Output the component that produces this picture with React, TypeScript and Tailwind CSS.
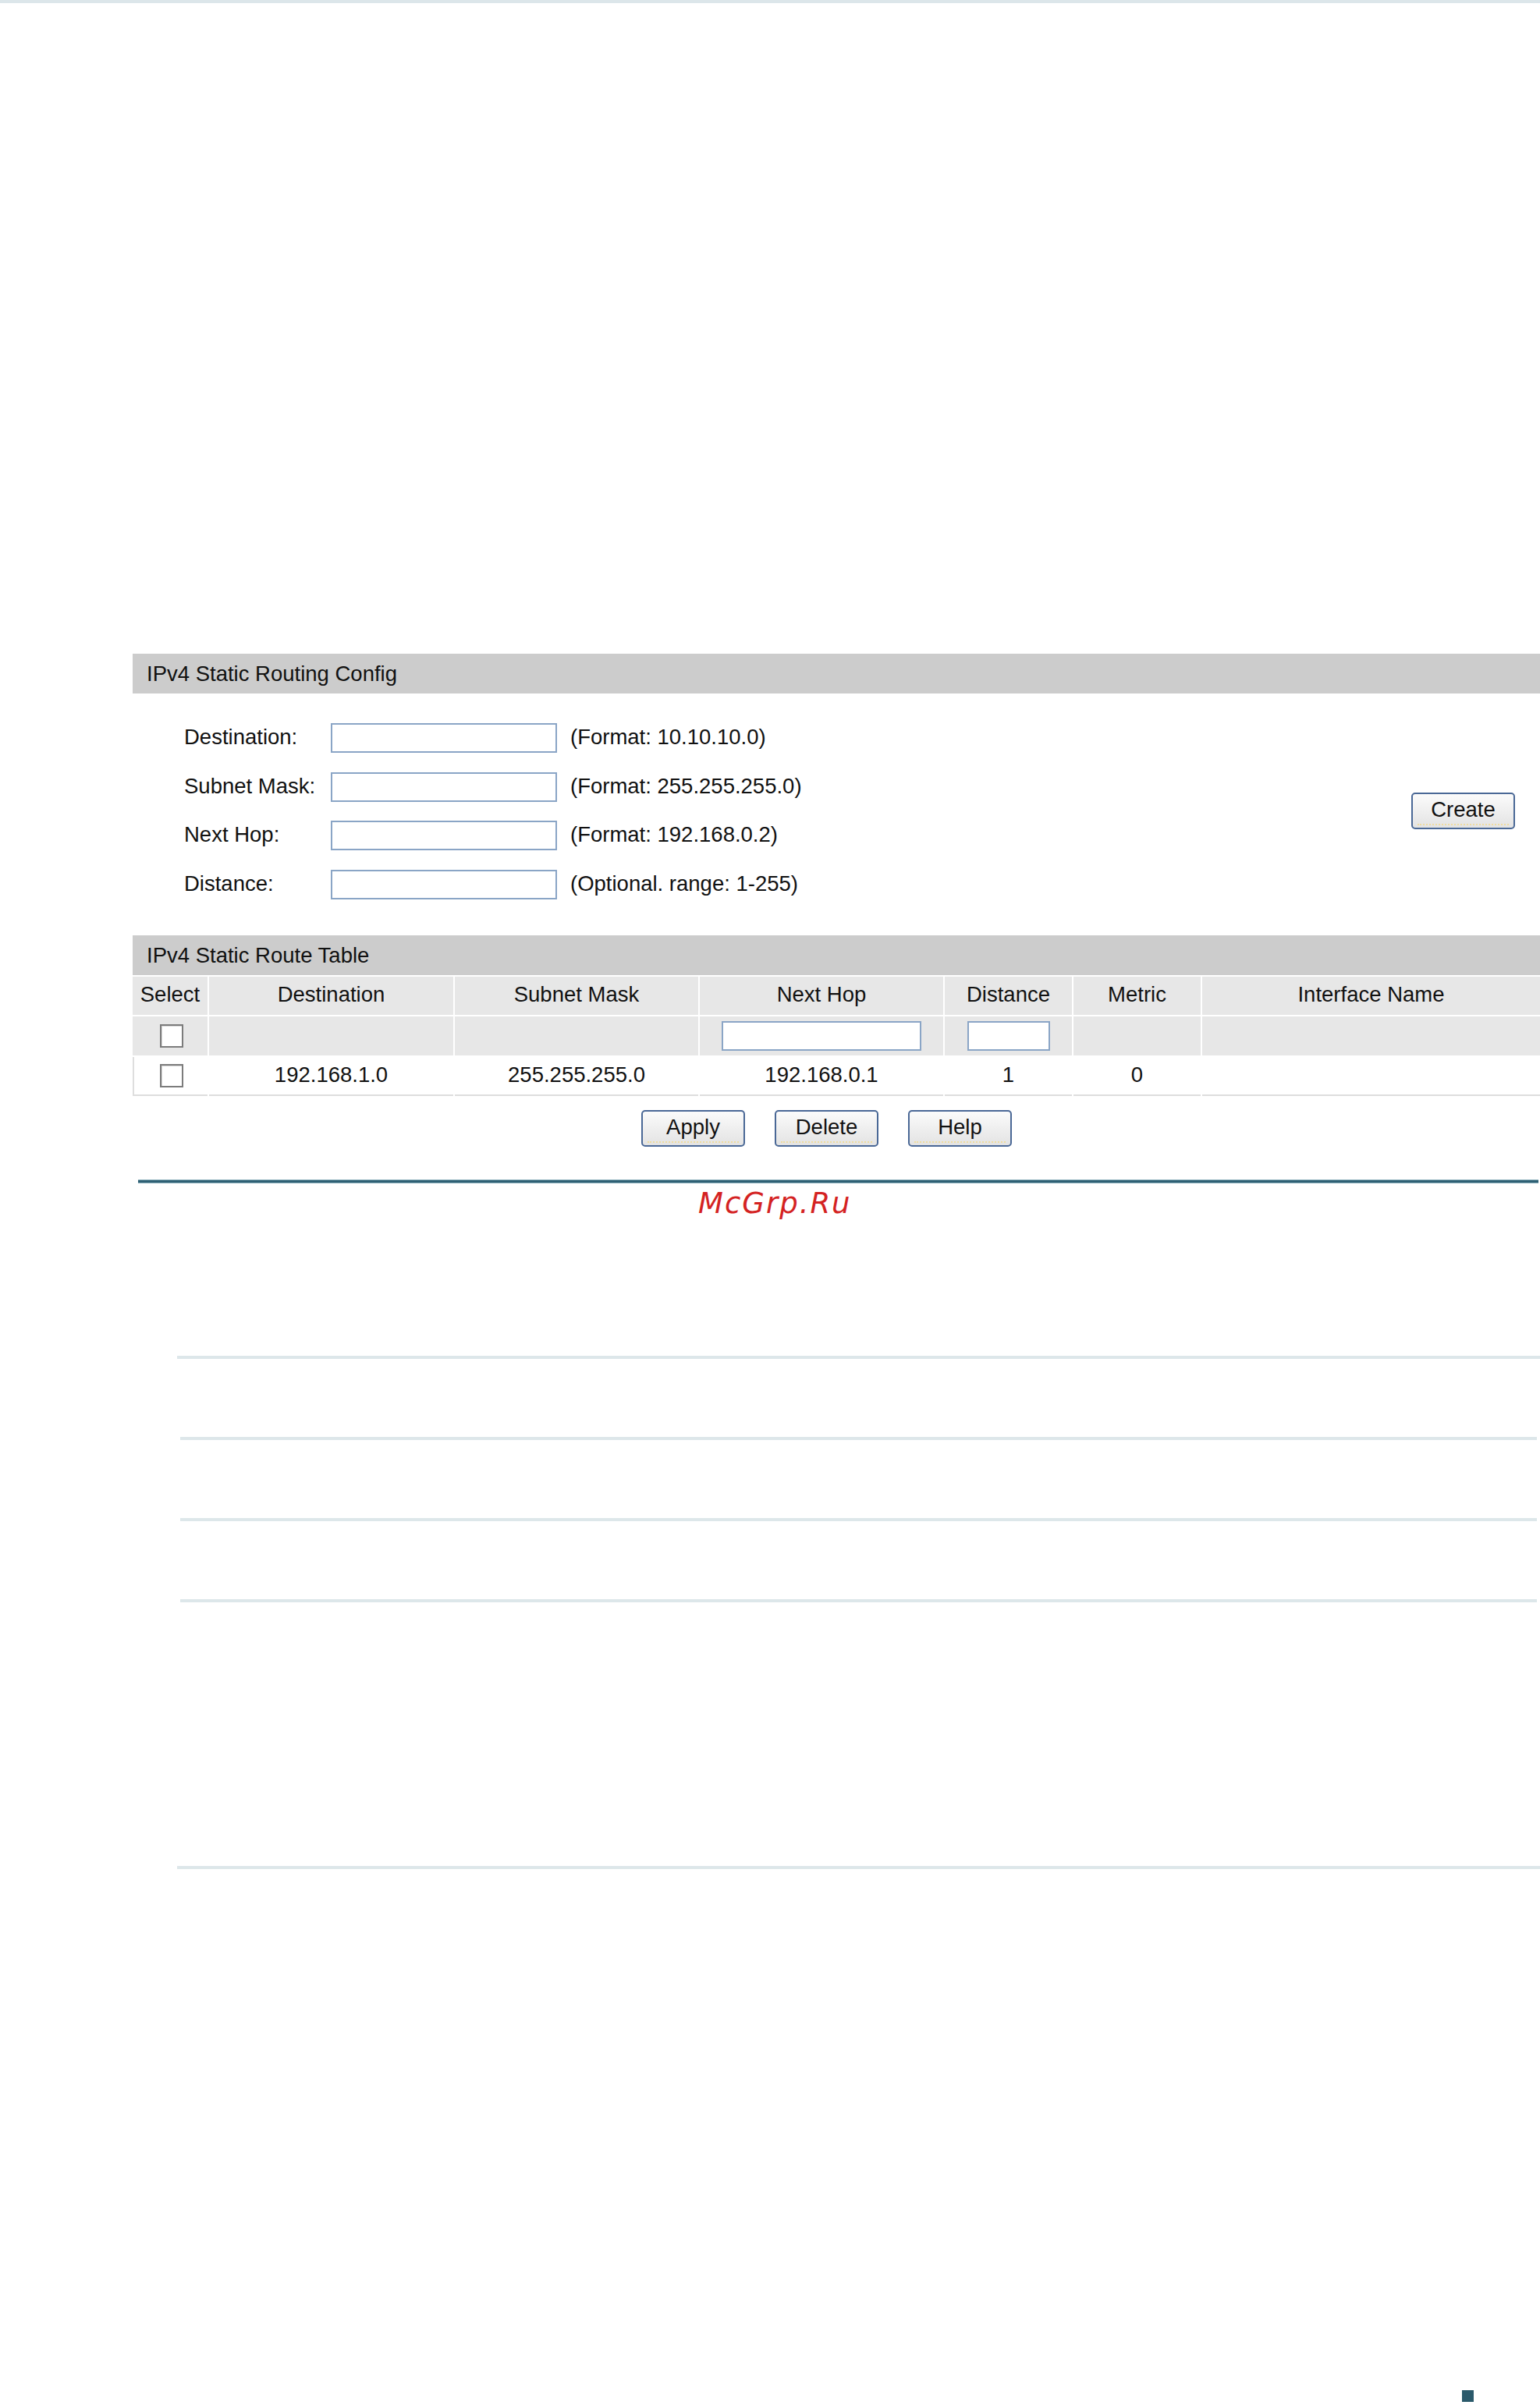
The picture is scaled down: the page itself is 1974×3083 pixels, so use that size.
import React from 'react';

const configRows = [
  { label: 'Destination:', hint: '(Format: 10.10.10.0)' },
  { label: 'Subnet Mask:', hint: '(Format: 255.255.255.0)' },
  { label: 'Next Hop:', hint: '(Format: 192.168.0.2)' },
  { label: 'Distance:', hint: '(Optional. range: 1-255)' },
];

const columns = ['Select', 'Destination', 'Subnet Mask', 'Next Hop', 'Distance', 'Metric', 'Interface Name'];

const gridCols = 'grid grid-cols-[96px_313px_312px_312px_163px_163px_1fr] gap-x-[2px]';

const Checkbox: React.FC = () => (
  <input
    type="checkbox"
    className="appearance-none w-[30px] h-[30px] border-2 border-[#7c7c7c] bg-white shadow-[inset_1px_1px_0_#d8d8d8]"
  />
);

const Button: React.FC<{ label: string }> = ({ label }) => (
  <button className="relative w-[133px] h-[47px] pb-[3px] rounded-[5px] border-2 border-[#4a6896] bg-linear-to-b from-[#fbfbfb] to-[#e3e3e3] text-[27.5px] text-[#111] leading-none">
    {label}
    <span className="absolute left-[6px] right-[6px] bottom-[3px] border-b-2 border-dotted border-[#efdca0]" />
  </button>
);

const TextBox: React.FC<{ w: string }> = ({ w }) => (
  <div className={`${w} h-[38px] border-2 border-[#8aa5c6] bg-white`} />
);

export default function App() {
  return (
    <div className="w-[1974px] h-[3083px] bg-white font-['Liberation_Sans',Arial,sans-serif] text-[#111] text-[27.5px]">
      <div className="h-[4px] bg-[#dce6ea]" />

      <div className="ml-[170px] mt-[834px]">
        {/* config panel */}
        <div className="h-[51px] bg-[#cccccc] pl-[18px] flex items-center">IPv4 Static Routing Config</div>
        <div className="h-[310px] pt-[38px] pb-[46px] flex items-center">
          <div className="flex flex-col gap-y-[24.5px] pl-[66px]">
            {configRows.map((row) => (
              <div key={row.label} className="flex items-center h-[38px]">
                <span className="w-[188px] pb-[3px]">{row.label}</span>
                <TextBox w="w-[290px]" />
                <span className="ml-[17px] pb-[3px]">{row.hint}</span>
              </div>
            ))}
          </div>
          <div className="ml-auto mr-[32px] h-[48px] flex">
            <Button label="Create" />
          </div>
        </div>

        {/* route table */}
        <div className="h-[51px] bg-[#cccccc] pl-[18px] flex items-center">IPv4 Static Route Table</div>
        <div className="flex flex-col gap-y-[2px] pt-[2px]">
          <div className={`${gridCols} h-[49px]`}>
            {columns.map((c) => (
              <div key={c} className="bg-[#e7e7e7] flex items-center justify-center whitespace-nowrap pb-[3px]">
                {c}
              </div>
            ))}
          </div>
          <div className={`${gridCols} h-[50px]`}>
            <div className="bg-[#e7e7e7] flex items-center justify-center pl-[4px]">
              <Checkbox />
            </div>
            <div className="bg-[#e7e7e7]" />
            <div className="bg-[#e7e7e7]" />
            <div className="bg-[#e7e7e7] flex items-center justify-center">
              <TextBox w="w-[256px]" />
            </div>
            <div className="bg-[#e7e7e7] flex items-center justify-center">
              <TextBox w="w-[106px]" />
            </div>
            <div className="bg-[#e7e7e7]" />
            <div className="bg-[#e7e7e7]" />
          </div>
          <div className={`${gridCols} h-[50px]`}>
            <div className="border-l-2 border-b-2 border-[#dedede] flex items-center justify-center pl-[2px]">
              <Checkbox />
            </div>
            {['192.168.1.0', '255.255.255.0', '192.168.0.1', '1', '0', ''].map((v, i) => (
              <div key={i} className="border-b-2 border-[#dedede] flex items-center justify-center pb-[3px]">
                {v}
              </div>
            ))}
          </div>
        </div>

        <div className="mt-[18px] flex gap-x-[38px] pl-[652px]">
          <Button label="Apply" />
          <Button label="Delete" />
          <Button label="Help" />
        </div>
      </div>

      <div className="mt-[42px] ml-[177px] mr-[2px] h-[5px] bg-[#2e6074] border-y border-[#8db0bd]" />

      <div className="ml-[895px] mt-[4px] leading-[43px] font-['DejaVu_Sans',sans-serif] italic text-[37px] tracking-[2px] text-[#d42222]">
        McGrp.Ru
      </div>

      <div className="mt-[174px] ml-[227px] h-[4px] bg-[#dde7ea]" />
      <div className="mt-[100px] ml-[231px] mr-[4px] h-[4px] bg-[#dde7ea]" />
      <div className="mt-[100px] ml-[231px] mr-[4px] h-[4px] bg-[#dde7ea]" />
      <div className="mt-[100px] ml-[231px] mr-[4px] h-[4px] bg-[#dde7ea]" />
      <div className="mt-[338px] ml-[227px] h-[4px] bg-[#dde7ea]" />

      <div className="mt-[668px] ml-[1874px] w-[15px] h-[15px] bg-[#2b5a6b]" />
    </div>
  );
}
